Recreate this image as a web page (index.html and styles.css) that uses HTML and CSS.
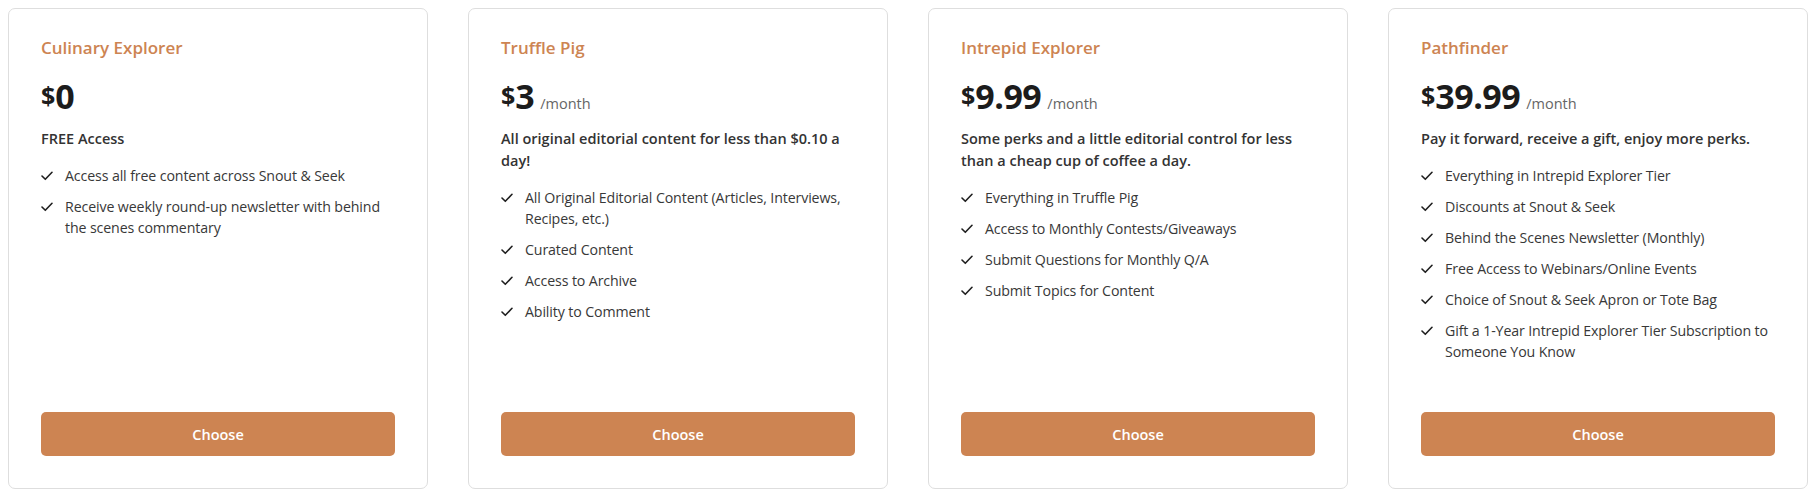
FILE: index.html
```html
<!DOCTYPE html>
<html lang="en">
<head>
<meta charset="utf-8">
<title>Plans</title>
<link rel="stylesheet" href="styles.css">
</head>
<body>
<div class="plans">
  <div class="card">
    <h3 class="tier">Culinary Explorer</h3>
    <div class="price"><span class="cur">$</span><span class="amt">0</span></div>
    <p class="desc">FREE Access</p>
    <ul class="perks">
      <li><svg class="chk" viewBox="0 0 12 10"><path d="M1 5 L4.3 8.3 L11 1.3"/></svg><span>Access all free content across Snout &amp; Seek</span></li>
      <li><svg class="chk" viewBox="0 0 12 10"><path d="M1 5 L4.3 8.3 L11 1.3"/></svg><span>Receive weekly round-up newsletter with behind the scenes commentary</span></li>
    </ul>
    <button class="choose">Choose</button>
  </div>
  <div class="card">
    <h3 class="tier">Truffle Pig</h3>
    <div class="price"><span class="cur">$</span><span class="amt">3</span><span class="per">/month</span></div>
    <p class="desc">All original editorial content for less than $0.10 a day!</p>
    <ul class="perks">
      <li><svg class="chk" viewBox="0 0 12 10"><path d="M1 5 L4.3 8.3 L11 1.3"/></svg><span>All Original Editorial Content (Articles, Interviews, Recipes, etc.)</span></li>
      <li><svg class="chk" viewBox="0 0 12 10"><path d="M1 5 L4.3 8.3 L11 1.3"/></svg><span>Curated Content</span></li>
      <li><svg class="chk" viewBox="0 0 12 10"><path d="M1 5 L4.3 8.3 L11 1.3"/></svg><span>Access to Archive</span></li>
      <li><svg class="chk" viewBox="0 0 12 10"><path d="M1 5 L4.3 8.3 L11 1.3"/></svg><span>Ability to Comment</span></li>
    </ul>
    <button class="choose">Choose</button>
  </div>
  <div class="card">
    <h3 class="tier">Intrepid Explorer</h3>
    <div class="price"><span class="cur">$</span><span class="amt">9.99</span><span class="per">/month</span></div>
    <p class="desc">Some perks and a little editorial control for less than a cheap cup of coffee a day.</p>
    <ul class="perks">
      <li><svg class="chk" viewBox="0 0 12 10"><path d="M1 5 L4.3 8.3 L11 1.3"/></svg><span>Everything in Truffle Pig</span></li>
      <li><svg class="chk" viewBox="0 0 12 10"><path d="M1 5 L4.3 8.3 L11 1.3"/></svg><span>Access to Monthly Contests/Giveaways</span></li>
      <li><svg class="chk" viewBox="0 0 12 10"><path d="M1 5 L4.3 8.3 L11 1.3"/></svg><span>Submit Questions for Monthly Q/A</span></li>
      <li><svg class="chk" viewBox="0 0 12 10"><path d="M1 5 L4.3 8.3 L11 1.3"/></svg><span>Submit Topics for Content</span></li>
    </ul>
    <button class="choose">Choose</button>
  </div>
  <div class="card">
    <h3 class="tier">Pathfinder</h3>
    <div class="price"><span class="cur">$</span><span class="amt">39.99</span><span class="per">/month</span></div>
    <p class="desc">Pay it forward, receive a gift, enjoy more perks.</p>
    <ul class="perks">
      <li><svg class="chk" viewBox="0 0 12 10"><path d="M1 5 L4.3 8.3 L11 1.3"/></svg><span>Everything in Intrepid Explorer Tier</span></li>
      <li><svg class="chk" viewBox="0 0 12 10"><path d="M1 5 L4.3 8.3 L11 1.3"/></svg><span>Discounts at Snout &amp; Seek</span></li>
      <li><svg class="chk" viewBox="0 0 12 10"><path d="M1 5 L4.3 8.3 L11 1.3"/></svg><span>Behind the Scenes Newsletter (Monthly)</span></li>
      <li><svg class="chk" viewBox="0 0 12 10"><path d="M1 5 L4.3 8.3 L11 1.3"/></svg><span>Free Access to Webinars/Online Events</span></li>
      <li><svg class="chk" viewBox="0 0 12 10"><path d="M1 5 L4.3 8.3 L11 1.3"/></svg><span>Choice of Snout &amp; Seek Apron or Tote Bag</span></li>
      <li><svg class="chk" viewBox="0 0 12 10"><path d="M1 5 L4.3 8.3 L11 1.3"/></svg><span>Gift a 1-Year Intrepid Explorer Tier Subscription to Someone You Know</span></li>
    </ul>
    <button class="choose">Choose</button>
  </div>
</div>
</body>
</html>
```

FILE: styles.css
```css
html, body {
  margin: 0;
  padding: 0;
  background: #ffffff;
}

body {
  padding: 8px;
  font-family: "Open Sans", "Noto Sans", "Liberation Sans", sans-serif;
  color: #333333;
}

.plans {
  display: grid;
  grid-template-columns: repeat(4, 420px);
  gap: 40px;
  height: 481px;
}

.card {
  display: flex;
  flex-direction: column;
  border: 1px solid #dedede;
  border-radius: 7px;
  padding: 29px 32px 32px;
  box-sizing: border-box;
}

.tier {
  margin: 0 0 18px;
  font-size: 17px;
  line-height: 20px;
  font-weight: 600;
  color: #cd8452;
}

.price {
  margin: 0 0 12px;
  font-size: 34px;
  line-height: 40px;
  height: 40px;
  color: #1c1c1c;
  white-space: nowrap;
}

.cur {
  font-size: 25px;
  line-height: 1;
  font-weight: 700;
  vertical-align: 4px;
}

.amt {
  font-size: 34px;
  font-weight: 700;
  letter-spacing: -0.5px;
}

.per {
  margin-left: 6px;
  font-size: 14.5px;
  line-height: 1;
  color: #666666;
}

.desc {
  margin: 0 0 15px;
  font-size: 14.5px;
  line-height: 22px;
  font-weight: 600;
  color: #333333;
}

.perks {
  list-style: none;
  margin: 0;
  padding: 0;
  display: flex;
  flex-direction: column;
  gap: 10px;
}

.perks li {
  display: flex;
  align-items: flex-start;
  font-size: 14.2px;
  line-height: 21px;
  letter-spacing: -0.12px;
  color: #383838;
}

.chk {
  flex: none;
  width: 12px;
  height: 10px;
  margin: 6px 12px 0 0;
  fill: none;
  stroke: #1f1f1f;
  stroke-width: 1.6;
  stroke-linecap: round;
  stroke-linejoin: round;
}

.choose {
  margin-top: auto;
  height: 44px;
  width: 100%;
  border: 0;
  border-radius: 5px;
  background: #cd8452;
  color: #ffffff;
  font-family: inherit;
  font-size: 14.5px;
  font-weight: 600;
  cursor: pointer;
}
```
